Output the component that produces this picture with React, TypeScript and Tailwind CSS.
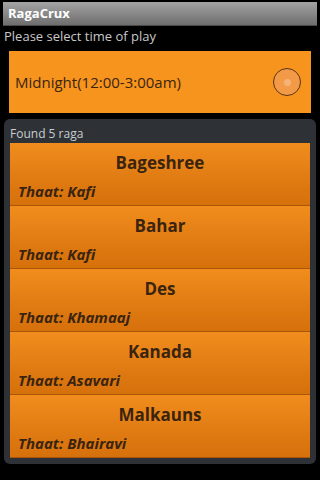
const ragas = [
  { name: 'Bageshree', thaat: 'Kafi' },
  { name: 'Bahar', thaat: 'Kafi' },
  { name: 'Des', thaat: 'Khamaaj' },
  { name: 'Kanada', thaat: 'Asavari' },
  { name: 'Malkauns', thaat: 'Bhairavi' },
]

export default function App() {
  return (
    <div className="w-[320px] h-[480px] bg-black overflow-hidden font-['Open_Sans','Noto_Sans',sans-serif]">
      {/* title bar */}
      <div className="pt-[2px] px-[3px]">
        <div className="h-[24px] flex items-center pl-[5px] bg-gradient-to-b from-[#a4a4a4] to-[#6e6e6e] border-b border-[#4a4a4a]">
          <span className="text-white font-bold text-[13px] leading-none">RagaCrux</span>
        </div>
      </div>

      <p className="text-[#c8c8c8] text-[13px] leading-none pl-[4px] mt-[4px]">Please select time of play</p>

      {/* time selector */}
      <div className="mx-[9px] mt-[8px] h-[62px] bg-[#f7941e] flex items-center justify-between pl-[6px] pr-[10px]">
        <span className="text-[#3a2410] text-[15px]">Midnight(12:00-3:00am)</span>
        <div className="w-[28px] h-[28px] rounded-full border-[1.5px] border-[#5a3410] bg-[#f39a48] flex items-center justify-center">
          <div className="w-[7px] h-[7px] rounded-full bg-[#f5b476]" />
        </div>
      </div>

      {/* result panel */}
      <div className="mx-[4px] mt-[6px] h-[345px] bg-[#2e3236] rounded-[6px] px-[6px] pt-[9px]">
        <p className="text-[#c8ccd0] text-[12px] leading-none">Found 5 raga</p>
        <div className="mt-[3px] flex flex-col">
          {ragas.map(r => (
            <div
              key={r.name}
              className="h-[63px] bg-gradient-to-b from-[#f18c1d] to-[#d5700b] border-b border-[#a85608] flex flex-col"
            >
              <div className="h-[40px] flex items-center justify-center">
                <span className="text-[#3a2410] font-bold text-[17px]">{r.name}</span>
              </div>
              <span className="pl-[8px] text-[#3a2410] font-bold italic text-[15px] leading-none mt-[1px]">
                Thaat: {r.thaat}
              </span>
            </div>
          ))}
        </div>
      </div>
    </div>
  )
}
